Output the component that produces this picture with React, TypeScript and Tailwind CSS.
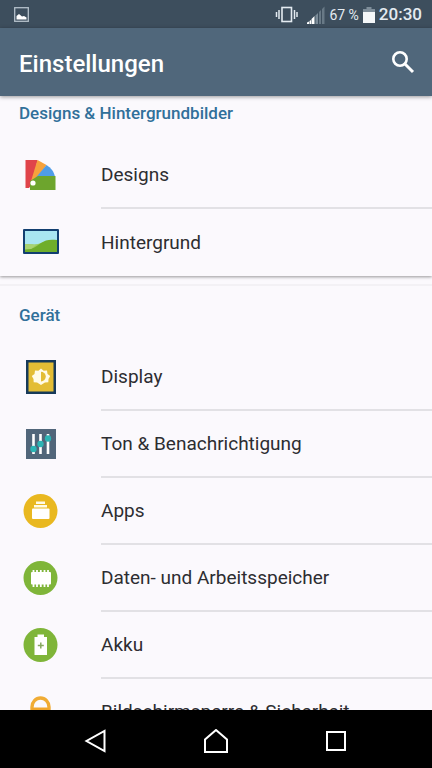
import type { ReactNode } from "react";

const DesignsIcon = () => (
  <svg className="size-9" viewBox="0 0 36 36">
    <path d="M3.500 3H15.500L11 26 7 31H3.500z" fill="#e0444a" />
    <path d="M15.500 3l9 5L12 26l-3-2z" fill="#f6a23c" />
    <path d="M24.500 8c4.500 3 7.500 6.500 8.500 12L10 27l1-3z" fill="#4f9de8" />
    <path d="M16 19h17.500v14H8v-9z" fill="#6da52d" />
    <circle cx="11" cy="26" r="2.600" fill="#fff" />
  </svg>
);

const WallpaperIcon = () => (
  <svg className="h-9 w-[38px]" viewBox="0 0 38 36">
    <rect x="1" y="5" width="36" height="25" rx="1" fill="#123f70" />
    <rect x="3" y="7" width="32" height="21" fill="#a9e6f1" />
    <path d="M3 20c6 0 9 1 13 0s8-4 19-4v12H3z" fill="#9ccb5c" />
    <path d="M9 25c5-2 7-4 10-6 4-3 9-4 16-3v12H3v-3z" fill="#6fae2b" />
    <path d="M3 20c5 0 8 1 11 1l-5 4-6 .5z" fill="#a8d372" />
  </svg>
);

const DisplayIcon = () => (
  <svg className="size-9" viewBox="0 0 36 36">
    <rect x="4" y="1" width="30" height="34" fill="#173a59" />
    <rect x="6.500" y="3.500" width="25" height="29" fill="#e3bd35" />
    <path
      d="M19 9.500l2.600 2.200 3.400-.2.500 3.400 2.700 2.200-1.700 3-.2 3.200-3.400.2-3.900 2.600-3.900-2.600-3.400-.2-.2-3.200-1.700-3 2.700-2.200.5-3.400 3.400.2z"
      fill="#fffbe8"
    />
    <path d="M19 12.800a4.800 4.800 0 0 1 0 9.600z" fill="#e3bd35" />
  </svg>
);

const SoundIcon = () => (
  <svg className="size-9" viewBox="0 0 36 36">
    <rect x="4" y="3" width="30" height="30" fill="#51667a" />
    <path d="M11.500 8v20M18.500 8v20M26 8v20" stroke="#fff" strokeWidth="2.600" />
    <g fill="#2cb4b4">
      <circle cx="11.500" cy="23" r="3.200" />
      <circle cx="18.500" cy="18" r="3.200" />
      <circle cx="26" cy="12.500" r="3.200" />
    </g>
  </svg>
);

const AppsIcon = () => (
  <svg className="size-9" viewBox="0 0 36 36">
    <circle cx="18.500" cy="18" r="17" fill="#e9b820" />
    <path d="M14 8.500h9V11h-9zM12 12h13v2.500H12z" fill="#fffbe8" />
    <rect x="10" y="15.500" width="17.500" height="10.500" rx="1" fill="#fff" />
  </svg>
);

const MemoryIcon = () => (
  <svg className="size-9" viewBox="0 0 36 36">
    <circle cx="18.500" cy="18" r="17" fill="#7fb539" />
    <rect x="9" y="12" width="20" height="12.500" rx="1" fill="#fff" />
    <path
      d="M11.500 10v17M15 10v17M18.800 10v17M22.500 10v17M26 10v17"
      stroke="#fff"
      strokeWidth="1.800"
    />
  </svg>
);

const BatteryIcon = () => (
  <svg className="size-9" viewBox="0 0 36 36">
    <circle cx="18.500" cy="18" r="17" fill="#7fb539" />
    <path d="M15.500 7.500h6.500V10h3v18H12.500V10h3z" fill="#fff" />
    <path d="M18.800 15.500v6M15.800 18.500h6" stroke="#87a860" strokeWidth="1.500" />
  </svg>
);

const LockIcon = () => (
  <svg className="size-9" viewBox="0 0 36 36">
    <path d="M10 16v-3a8.500 9 0 0 1 17 0v3" fill="none" stroke="#f0ac35" strokeWidth="3.400" />
    <rect x="9" y="13.500" width="19" height="17" rx="3" fill="#f0a52c" />
  </svg>
);

const SettingsRow = ({
  icon,
  label,
  last = false,
}: {
  icon: ReactNode;
  label: string;
  last?: boolean;
}) => (
  <li>
    <a href="#" className="flex h-[67px]">
      <span className="flex w-[101px] shrink-0 items-center pb-0.5 pl-[22px]">
        {icon}
      </span>
      <span
        className={
          last
            ? "flex flex-1 items-center pt-0.5 whitespace-nowrap"
            : "flex flex-1 items-center border-b-2 border-[#e2e1e5] pt-0.5 whitespace-nowrap"
        }
      >
        {label}
      </span>
    </a>
  </li>
);

const StatusBar = () => (
  <div className="flex h-7 shrink-0 items-center bg-[#3d4e5d] pt-0.5 pr-2.5 pl-3.5 text-[#e4ebf1]">
    <svg className="h-4 w-4" viewBox="0 0 16 16">
      <rect x="0.700" y="0.700" width="13.600" height="13.600" fill="none" stroke="#b4c0ca" strokeWidth="1.300" />
      <path d="M2.500 12.500V9l2.500-2 3 2.500 2-.5 2.500 1.500v2z" fill="#fff" />
    </svg>
    <svg className="ml-auto h-5 w-6" viewBox="0 0 24 20">
      <rect x="7" y="2.500" width="9.500" height="14" fill="none" stroke="#e4ebf1" strokeWidth="1.600" />
      <path d="M4 5v9M19.500 5v9M1.500 7v5M22 7v5" stroke="#e4ebf1" strokeWidth="1.500" />
    </svg>
    <svg className="ml-2 h-5 w-[18px]" viewBox="0 0 18 20">
      <path d="M12 7l2-2v14h-2zM15 4l2.500-2.500V19H15z" fill="#687986" />
      <path d="M8.500 10.500l2.500-2.500v11H8.500z" fill="#7b8b98" />
      <path d="M0 19v-1.500l2-1V19zM2.500 19v-3l1.500-1v4zM4.500 19v-5l3-3V19z" fill="#fff" />
    </svg>
    <span className="ml-1 text-sm">67 %</span>
    <svg className="ml-1 h-5 w-3" viewBox="0 0 12 20">
      <path d="M3.500 2h5v2H12v4H0V4h3.500z" fill="#7f8e9a" />
      <path d="M0 7h12v11H0z" fill="#f4f7f9" />
    </svg>
    <span className="ml-1 text-[17px] font-medium">20:30</span>
  </div>
);

const App = () => {
  return (
    <div className="flex h-screen flex-col overflow-hidden bg-[#fbf9fd] font-[Roboto,sans-serif] text-[#2d2d31]">
      <StatusBar />
      <header className="z-10 flex h-[68px] shrink-0 items-center justify-between bg-[#50677b] pr-[17px] pl-[19px] text-white shadow-[0_1px_4px_rgba(0,0,0,0.4)]">
        <h1 className="pt-1 text-2xl font-medium">Einstellungen</h1>
        <button type="button" aria-label="Suchen">
          <svg className="size-6" viewBox="0 0 24 24" fill="none" stroke="#fff">
            <circle cx="9" cy="9" r="6.700" strokeWidth="2.600" />
            <path d="M14 14l8 8" strokeWidth="3" />
          </svg>
        </button>
      </header>

      <main className="min-h-0 flex-1 overflow-hidden text-[19px]">
        <section className="shadow-[0_1px_3px_rgba(0,0,0,0.4)]">
          <h2 className="h-[46px] pt-[5px] pl-[19px] text-[17px] font-medium text-[#31709a]">
            Designs & Hintergrundbilder
          </h2>
          <ul>
            <SettingsRow icon={<DesignsIcon />} label="Designs" />
            <SettingsRow icon={<WallpaperIcon />} label="Hintergrund" last />
          </ul>
        </section>
        <section className="mt-2 border-t-2 border-[#f3f1f5]">
          <h2 className="h-[58px] pt-[17px] pl-[19px] text-[17px] font-medium text-[#31709a]">
            Gerät
          </h2>
          <ul>
            <SettingsRow icon={<DisplayIcon />} label="Display" />
            <SettingsRow icon={<SoundIcon />} label="Ton & Benachrichtigung" />
            <SettingsRow icon={<AppsIcon />} label="Apps" />
            <SettingsRow icon={<MemoryIcon />} label="Daten- und Arbeitsspeicher" />
            <SettingsRow icon={<BatteryIcon />} label="Akku" />
            <SettingsRow icon={<LockIcon />} label="Bildschirmsperre & Sicherheit" />
          </ul>
        </section>
      </main>

      <nav className="flex h-[58px] shrink-0 items-center justify-center gap-24 bg-black pt-1">
        <button type="button" aria-label="Zurück">
          <svg className="size-6" viewBox="0 0 24 24" fill="none" stroke="#fff" strokeWidth="2">
            <path d="M20.500 2v20L2.500 12z" />
          </svg>
        </button>
        <button type="button" aria-label="Startseite">
          <svg className="size-6" viewBox="0 0 24 24" fill="none" stroke="#fff" strokeWidth="2">
            <path d="M1 23V10.500L12 1l11 9.500V23z" />
          </svg>
        </button>
        <button type="button" aria-label="Letzte Apps">
          <svg className="size-6" viewBox="0 0 24 24" fill="none" stroke="#fff" strokeWidth="2">
            <rect x="3" y="3" width="18" height="18" />
          </svg>
        </button>
      </nav>
    </div>
  );
};

export default App;
